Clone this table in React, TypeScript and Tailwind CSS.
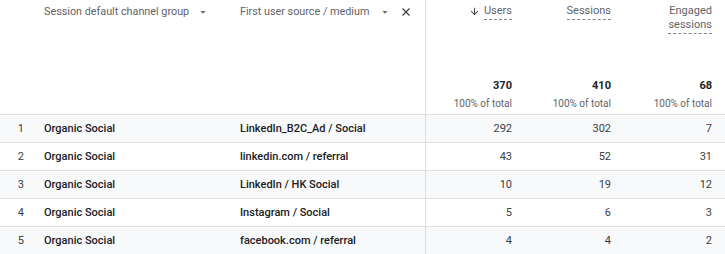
import React from "react";

const rows = [
  { i: 1, ch: "Organic Social", src: "LinkedIn_B2C_Ad / Social", u: "292", s: "302", e: "7" },
  { i: 2, ch: "Organic Social", src: "linkedin.com / referral", u: "43", s: "52", e: "31" },
  { i: 3, ch: "Organic Social", src: "LinkedIn / HK Social", u: "10", s: "19", e: "12" },
  { i: 4, ch: "Organic Social", src: "Instagram / Social", u: "5", s: "6", e: "3" },
  { i: 5, ch: "Organic Social", src: "facebook.com / referral", u: "4", s: "4", e: "2" },
];

function Caret({ ml }: { ml: string }) {
  return (
    <svg width="8" height="5" viewBox="0 0 8 5" className={ml}>
      <path d="M1.5 1 L6.5 1 L4 3.8 Z" fill="#5f6368" />
    </svg>
  );
}

function Close() {
  return (
    <svg width="10" height="10" viewBox="0 0 10 10" className="ml-[12px]">
      <path d="M1.5 1.5 L8.5 8.5 M8.5 1.5 L1.5 8.5" stroke="#3c4043" strokeWidth="1.2" />
    </svg>
  );
}

function ArrowDown() {
  return (
    <svg width="11" height="11" viewBox="0 0 24 24" className="mr-[4px]">
      <path d="M20 12l-1.41-1.41L13 16.17V4h-2v12.17l-5.58-5.59L4 12l8 8 8-8z" fill="#3c4043" />
    </svg>
  );
}

export default function App() {
  const grid = "grid grid-cols-[44px_196px_185px_100px_99px_1fr]";
  return (
    <div className="w-[725px] h-[254px] overflow-hidden bg-white font-['Roboto','Liberation_Sans',sans-serif]">
      <div className={`${grid} h-[115px] border-b border-[#e0e0e0]`}>
        <div />
        <div className="pt-[4px] flex items-start">
          <span className="flex items-center text-[10.8px] leading-[16px] text-[#5f6368]">
            Session default channel group
            <Caret ml="ml-[10px]" />
          </span>
        </div>
        <div className="pt-[4px] flex items-start">
          <span className="flex items-center text-[10.8px] leading-[16px] text-[#5f6368]">
            First user source / medium
            <Caret ml="ml-[12px]" />
            <Close />
          </span>
        </div>
        {[
          { h: ["Users"], arrow: true, t: "370" },
          { h: ["Sessions"], arrow: false, t: "410" },
          { h: ["Engaged", "sessions"], arrow: false, t: "68" },
        ].map((c, idx) => (
          <div
            key={idx}
            className={`flex flex-col items-end pr-[13px] pt-[4px] ${idx === 0 ? "border-l border-[#dadce0]" : ""}`}
          >
            <div className="flex items-start text-[11px] leading-[14px] text-[#5f6368] h-[67px]">
              {c.arrow && (
                <span className="pt-[2px]">
                  <ArrowDown />
                </span>
              )}
              <span className="border-b border-dashed border-[#80868b] text-right pb-[1px]">
                {c.h.map((l, k) => (
                  <div key={k}>{l}</div>
                ))}
              </span>
            </div>
            <div className="text-[11px] leading-[16px] font-bold text-[#202124] mt-[7px]">{c.t}</div>
            <div className="text-[10px] leading-[14px] text-[#5f6368] mt-[3px]">100% of total</div>
          </div>
        ))}
      </div>
      {rows.map((r, idx) => (
        <div
          key={r.i}
          className={`${grid} h-[28px] ${idx % 2 === 0 ? "bg-[#f8f9fa]" : "bg-white"} ${idx < rows.length - 1 ? "border-b border-[#e0e0e0]" : ""} text-[11px] leading-[28px]`}
        >
          <div className="w-[24px] text-right text-[#3c4043]">{r.i}</div>
          <div className="font-medium text-[#202124]">{r.ch}</div>
          <div className="font-medium text-[#202124]">{r.src}</div>
          <div className="border-l border-[#dadce0] text-right pr-[13px] text-[#3c4043]">{r.u}</div>
          <div className="text-right pr-[13px] text-[#3c4043]">{r.s}</div>
          <div className="text-right pr-[13px] text-[#3c4043]">{r.e}</div>
        </div>
      ))}
    </div>
  );
}
